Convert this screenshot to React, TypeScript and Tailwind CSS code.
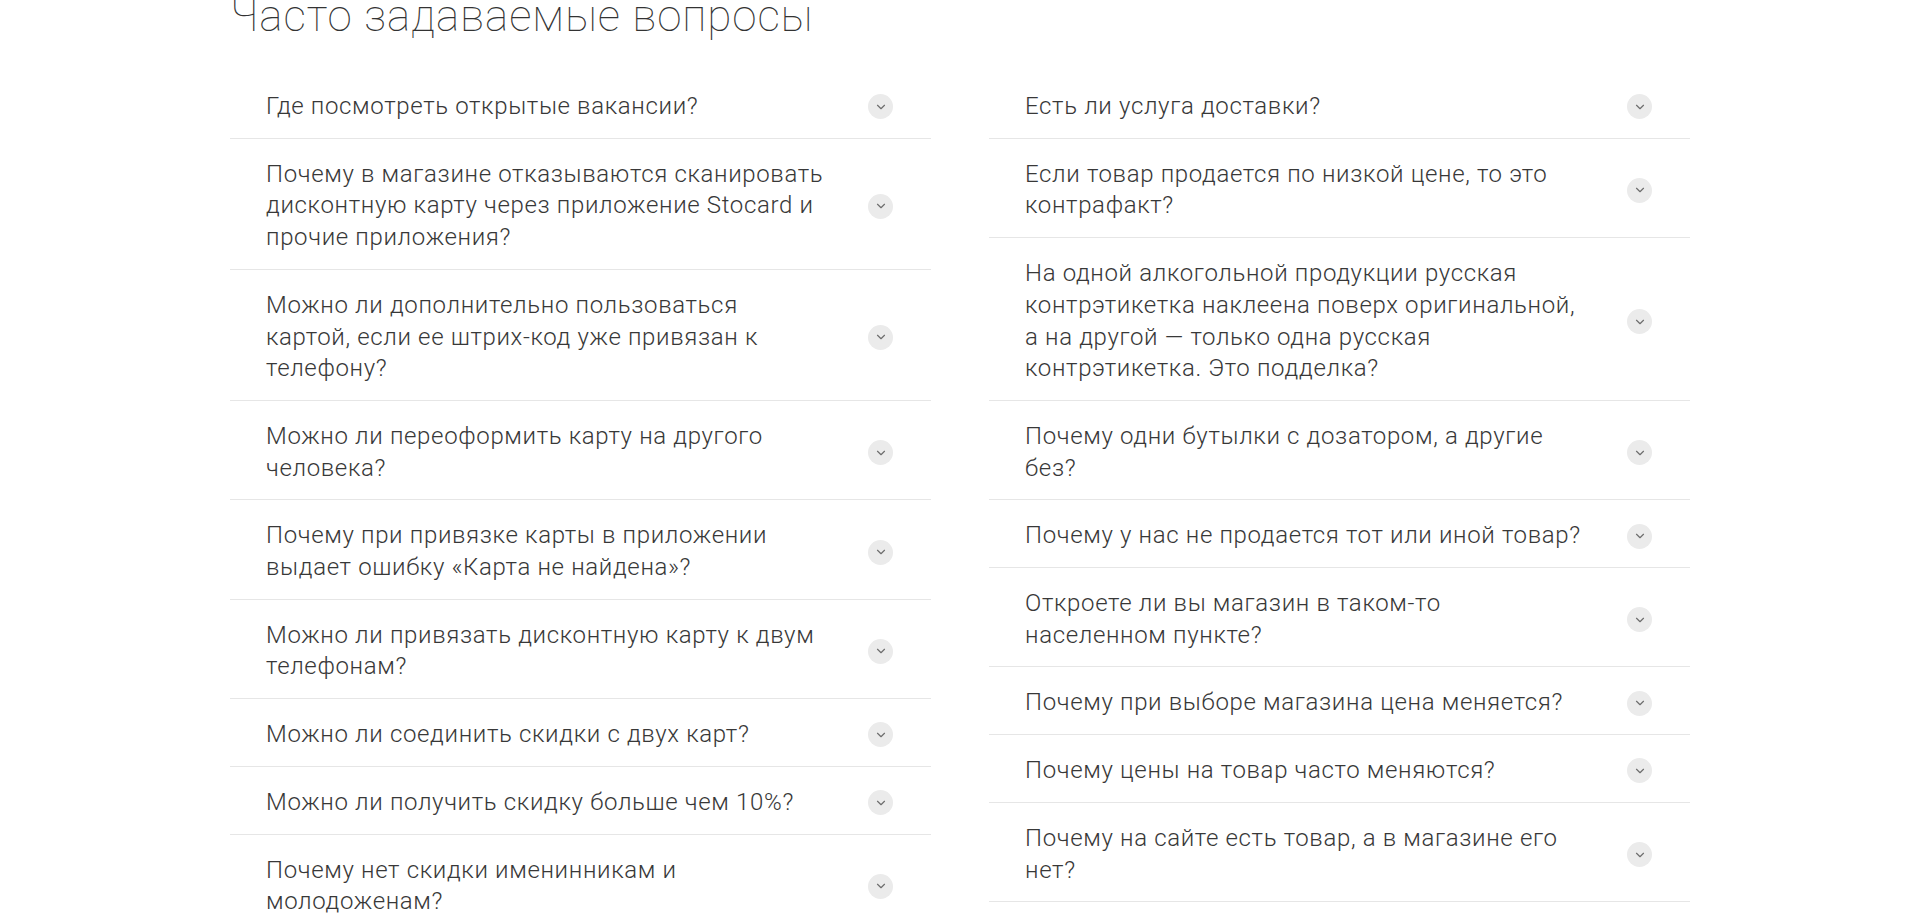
import { ChevronDown } from 'lucide-react';

const leftQuestions = [
  'Где посмотреть открытые вакансии?',
  'Почему в магазине отказываются сканировать дисконтную карту через приложение Stocard и прочие приложения?',
  'Можно ли дополнительно пользоваться картой, если ее штрих-код уже привязан к телефону?',
  'Можно ли переоформить карту на другого человека?',
  'Почему при привязке карты в приложении выдает ошибку «Карта не найдена»?',
  'Можно ли привязать дисконтную карту к двум телефонам?',
  'Можно ли соединить скидки с двух карт?',
  'Можно ли получить скидку больше чем 10%?',
  'Почему нет скидки именинникам и молодоженам?',
];

const rightQuestions = [
  'Есть ли услуга доставки?',
  'Если товар продается по низкой цене, то это контрафакт?',
  'На одной алкогольной продукции русская контрэтикетка наклеена поверх оригинальной, а на другой — только одна русская контрэтикетка. Это подделка?',
  'Почему одни бутылки с дозатором, а другие без?',
  'Почему у нас не продается тот или иной товар?',
  'Откроете ли вы магазин в таком-то населенном пункте?',
  'Почему при выборе магазина цена меняется?',
  'Почему цены на товар часто меняются?',
  'Почему на сайте есть товар, а в магазине его нет?',
];

const FaqItem = ({ question }: { question: string }) => (
  <button className="flex w-full items-center gap-[44px] border-b border-[#e6e6e6] pt-[20px] pb-[15px] pl-[36px] pr-[38px] text-left">
    <span className="flex-1 text-[24px] leading-[31.7px] tracking-[0.65px] font-light text-[#383838]">{question}</span>
    <span className="flex h-[25px] w-[25px] shrink-0 items-center justify-center rounded-full bg-[#ebebeb]">
      <ChevronDown className="h-[14px] w-[14px] text-[#6e6e6e]" strokeWidth={2} />
    </span>
  </button>
);

const FaqColumn = ({ items }: { items: string[] }) => (
  <div className="flex flex-col">
    {items.map((q) => (
      <FaqItem key={q} question={q} />
    ))}
  </div>
);

export default function App() {
  return (
    <div className="h-[913px] overflow-hidden bg-white" style={{ fontFamily: 'Roboto, "Noto Sans", sans-serif' }}>
      <section className="mx-auto w-[1460px]">
        <h2 className="-mt-[9px] mb-[30px] text-[44px] leading-[50px] tracking-[0.9px] font-thin text-[#333]">
          Часто задаваемые вопросы
        </h2>
        <div className="grid grid-cols-2 items-start gap-x-[58px]">
          <FaqColumn items={leftQuestions} />
          <FaqColumn items={rightQuestions} />
        </div>
      </section>
    </div>
  );
}
